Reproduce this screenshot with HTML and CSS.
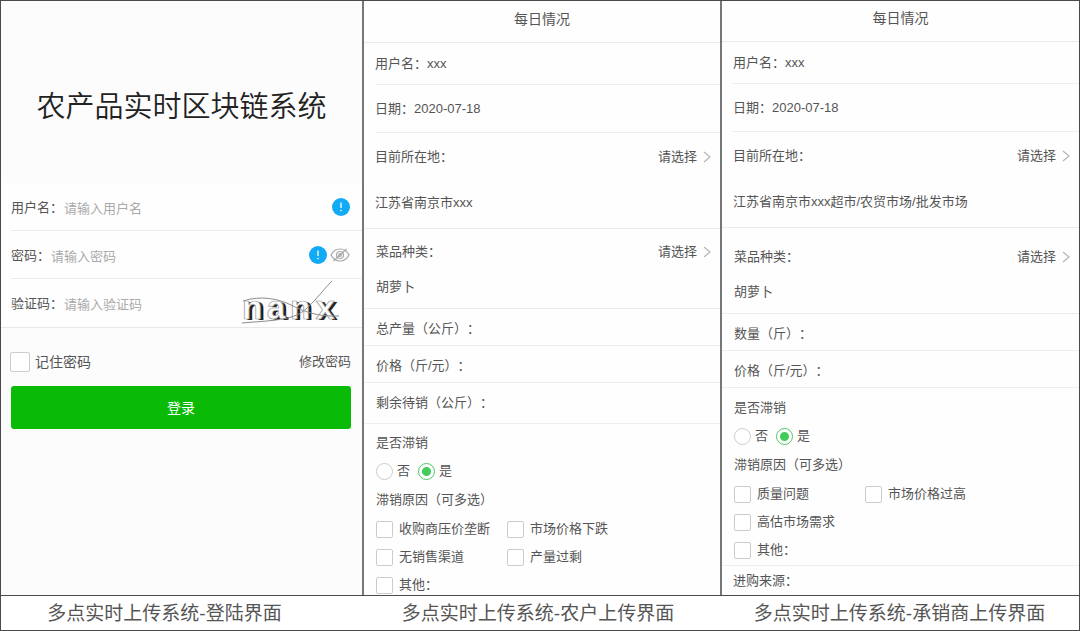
FILE: index.html
```html
<!DOCTYPE html>
<html lang="zh-CN">
<head>
<meta charset="utf-8">
<meta name="viewport" content="width=device-width, initial-scale=1">
<title>农产品实时区块链系统</title>
<link rel="stylesheet" href="styles.css">
</head>
<body>
<main class="board">
  <section class="screen login">
    <h1 class="login-title">农产品实时区块链系统</h1>
    <form class="login-form">
      <div class="login-fields">
        <div class="login-row">
          <label for="user">用户名：</label>
          <input id="user" type="text" placeholder="请输入用户名">
          <svg class="alert" viewBox="0 0 18 18" aria-hidden="true"><circle cx="9" cy="9" r="9" fill="#12aaf5"/><path d="M9 4.500V10" stroke="#fff" stroke-width="1.300"/><circle cx="9" cy="12.500" r=".8" fill="#fff"/></svg>
        </div>
        <div class="login-row">
          <label for="pass">密码：</label>
          <input id="pass" type="password" placeholder="请输入密码">
          <svg class="alert" viewBox="0 0 18 18" aria-hidden="true"><circle cx="9" cy="9" r="9" fill="#12aaf5"/><path d="M9 4.500V10" stroke="#fff" stroke-width="1.300"/><circle cx="9" cy="12.500" r=".8" fill="#fff"/></svg>
          <svg class="eye" viewBox="0 0 20 16" fill="none" stroke="#a8a8a8" stroke-width="1.200" aria-hidden="true"><path d="M1 8C5 0 15 0 19 8C15 16 5 16 1 8Z"/><circle cx="10" cy="8" r="3.500"/><circle cx="10" cy="8" r="1.300"/><path d="M3.500 14L16.500 2"/></svg>
        </div>
        <div class="login-row last">
          <label for="code">验证码：</label>
          <input id="code" type="text" placeholder="请输入验证码">
          <svg class="captcha" viewBox="0 0 100 48" role="img" aria-label="nanx">
            <g class="captcha-shadow"><text x="4 28 52 77" y="41">nanx</text></g>
            <g class="captcha-face"><text x="1 25 49 74" y="40">nanx</text></g>
            <path d="M2 22C20 16 38 20 50 26S76 38 98 37M1 44C22 42 44 42 58 35C70 28 80 13 91 2" fill="none" stroke="#8c8c8c"/>
          </svg>
        </div>
      </div>
      <div class="login-tools">
        <label class="remember"><input class="box" type="checkbox">记住密码</label>
        <a class="change" href="#">修改密码</a>
      </div>
      <button class="submit" type="button">登录</button>
    </form>
  </section>

  <section class="screen farmer">
    <h2 class="head">每日情况</h2>
    <form>
      <div class="row user"><span>用户名：xxx</span></div>
      <div class="row date"><span>日期：2020-07-18</span></div>
      <div class="group place">
        <div class="pick"><label for="f-place">目前所在地：</label><span class="picker"><select id="f-place"><option>请选择</option></select><svg class="chevron" viewBox="0 0 8 12" aria-hidden="true"><path d="M1 1L7 6L1 11"/></svg></span></div>
        <p class="value">江苏省南京市xxx</p>
      </div>
      <div class="group crop">
        <div class="pick"><label for="f-crop">菜品种类：</label><span class="picker"><select id="f-crop"><option>请选择</option></select><svg class="chevron" viewBox="0 0 8 12" aria-hidden="true"><path d="M1 1L7 6L1 11"/></svg></span></div>
        <p class="value">胡萝卜</p>
      </div>
      <div class="row entry"><label for="f-total">总产量（公斤）：</label><input id="f-total" type="text"></div>
      <div class="row entry"><label for="f-price">价格（斤/元）：</label><input id="f-price" type="text"></div>
      <div class="row entry tall"><label for="f-left">剩余待销（公斤）：</label><input id="f-left" type="text"></div>
      <fieldset class="sales">
        <legend>是否滞销</legend>
        <div class="radios">
          <label><input class="dot" type="radio" name="f-slow">否</label>
          <label><input class="dot" type="radio" name="f-slow" checked>是</label>
        </div>
      </fieldset>
      <fieldset class="reasons">
        <legend>滞销原因（可多选）</legend>
        <div class="choices">
          <label><input class="box" type="checkbox">收购商压价垄断</label>
          <label><input class="box" type="checkbox">市场价格下跌</label>
          <label><input class="box" type="checkbox">无销售渠道</label>
          <label><input class="box" type="checkbox">产量过剩</label>
          <label><input class="box" type="checkbox">其他：</label>
        </div>
      </fieldset>
    </form>
  </section>

  <section class="screen dealer">
    <h2 class="head">每日情况</h2>
    <form>
      <div class="row user"><span>用户名：xxx</span></div>
      <div class="row date"><span>日期：2020-07-18</span></div>
      <div class="group place">
        <div class="pick"><label for="d-place">目前所在地：</label><span class="picker"><select id="d-place"><option>请选择</option></select><svg class="chevron" viewBox="0 0 8 12" aria-hidden="true"><path d="M1 1L7 6L1 11"/></svg></span></div>
        <p class="value">江苏省南京市xxx超市/农贸市场/批发市场</p>
      </div>
      <div class="group crop">
        <div class="pick"><label for="d-crop">菜品种类：</label><span class="picker"><select id="d-crop"><option>请选择</option></select><svg class="chevron" viewBox="0 0 8 12" aria-hidden="true"><path d="M1 1L7 6L1 11"/></svg></span></div>
        <p class="value">胡萝卜</p>
      </div>
      <div class="row entry"><label for="d-count">数量（斤）：</label><input id="d-count" type="text"></div>
      <div class="row entry"><label for="d-price">价格（斤/元）：</label><input id="d-price" type="text"></div>
      <fieldset class="sales">
        <legend>是否滞销</legend>
        <div class="radios">
          <label><input class="dot" type="radio" name="d-slow">否</label>
          <label><input class="dot" type="radio" name="d-slow" checked>是</label>
        </div>
      </fieldset>
      <fieldset class="reasons">
        <legend>滞销原因（可多选）</legend>
        <div class="choices">
          <label><input class="box" type="checkbox">质量问题</label>
          <label><input class="box" type="checkbox">市场价格过高</label>
          <label class="full"><input class="box" type="checkbox">高估市场需求</label>
          <label><input class="box" type="checkbox">其他：</label>
        </div>
      </fieldset>
      <div class="row source"><label for="d-source">进购来源：</label><input id="d-source" type="text"></div>
    </form>
  </section>

  <p class="caption first">多点实时上传系统-登陆界面</p>
  <p class="caption second">多点实时上传系统-农户上传界面</p>
  <p class="caption">多点实时上传系统-承销商上传界面</p>
</main>
</body>
</html>
```

FILE: styles.css
```css
* { box-sizing: border-box; }
body {
  margin: 0;
  color: #555;
  background: #fff;
  font: 13px/20px "Liberation Sans", "Noto Sans CJK SC", sans-serif;
  text-spacing-trim: space-all;
}
h1, h2, p, fieldset, legend { margin: 0; padding: 0; border: 0; }
input, select, button { font: inherit; color: inherit; }
input[type="text"], input[type="password"] {
  flex: 1;
  min-width: 0;
  padding: 0;
  border: 0;
  outline: 0;
  background: none;
}

.board {
  display: grid;
  grid-template-columns: 361fr 358fr 359fr;
  grid-template-rows: 1fr auto;
  min-height: 100vh;
  border: 1px solid #4a4a4a;
}
.screen { background: #fefefe; }
.farmer, .dealer { border-left: 2px solid #777; }
.caption {
  padding: 4px 0 2px;
  border-top: 1px solid #4a4a4a;
  font-size: 19px;
  line-height: 28px;
  text-align: center;
}
.caption.first { padding-right: 34px; }
.caption.second { padding-right: 6px; }

/* Login */
.login { background: #fcfcfc; }
.login-title {
  padding: 86px 0 56px;
  color: #222;
  font-size: 29px;
  font-weight: 350;
  line-height: 40px;
  text-align: center;
}
.login-fields {
  padding-left: 10px;
  background: #fefefe;
  border-bottom: 1px solid #e8e8e8;
}
.login-row {
  display: flex;
  align-items: center;
  height: 48px;
  padding-right: 12px;
  border-bottom: 1px solid #ececec;
}
.login-row label { padding-top: 2px; }
.login-row input[type] { padding: 4px 0 0 1px; }
.login-row.last { border-bottom: 0; padding-right: 21px; }
.login-row input::placeholder { color: #aaa; opacity: 1; }
.alert { width: 18px; height: 18px; }
.eye { width: 20px; height: 16px; margin-left: 3px; }
.captcha { flex: none; width: 100px; height: 48px; overflow: visible; }
.captcha text { font: bold 34px "Liberation Mono", monospace; }
.captcha-shadow { fill: #222; }
.captcha-face { fill: #fdfdfd; stroke: #999; stroke-width: .7; }
.login-tools {
  display: flex;
  align-items: center;
  justify-content: space-between;
  padding: 24px 11px 14px 9px;
}
.remember { display: flex; align-items: center; gap: 5px; font-size: 14px; }
.change { color: inherit; text-decoration: none; }
.submit {
  display: block;
  width: calc(100% - 21px);
  height: 43px;
  margin: 0 11px 0 10px;
  border: 0;
  border-radius: 3px;
  background: #09bb07;
  color: #fff;
  font-size: 14px;
}

/* Daily report */
.head {
  padding: 8px 0 13px;
  border-bottom: 1px solid #eaeaea;
  font-size: 14px;
  font-weight: 400;
  line-height: 20px;
  text-align: center;
}
.dealer .head { padding: 7px 0 13px; }
.row { display: flex; align-items: center; border-bottom: 1px solid #eee; }
.user, .date { margin-left: 11px; }
.user { height: 42px; }
.date { height: 48px; }
.group { border-bottom: 1px solid #ececec; }
.place { padding: 14px 9px 15px 11px; }
.place .value { padding-top: 26px; }
.crop { padding: 13px 9px 11px 12px; }
.crop .value { padding-top: 15px; }
.dealer .crop { padding-top: 19px; }
.pick { display: flex; justify-content: space-between; }
.picker { display: flex; align-items: center; gap: 5px; }
.picker select {
  height: 20px;
  padding: 0;
  border: 0;
  outline: 0;
  background: none;
  appearance: none;
}
.chevron {
  width: 8px;
  height: 12px;
  fill: none;
  stroke: #b5b5b5;
  stroke-width: 1.2;
}
.entry { height: 37px; padding: 3px 12px 0; }
.tall { height: 41px; padding-top: 0; }
.sales { padding: 0 12px; }
.sales legend { padding-top: 9px; }
.dealer .sales legend { padding-top: 10px; }
.radios { display: flex; gap: 8px; padding-top: 8px; }
.radios label, .choices label { display: flex; align-items: center; }
.radios label { gap: 4px; }
.reasons { padding: 0 12px; }
.reasons legend { padding-top: 9px; }
.choices {
  display: grid;
  grid-template-columns: 131px 1fr;
  row-gap: 8px;
  padding-top: 9px;
}
.choices label { gap: 6px; }
.full { grid-column: 1 / -1; }
.box, .dot {
  flex: none;
  width: 17px;
  height: 17px;
  margin: 0;
  border: 1px solid #ccc;
  background: #fff;
  appearance: none;
}
.box { border-radius: 2px; }
.box:checked { background: #4cd964; }
.remember .box { width: 20px; height: 20px; }
.dot { border-radius: 50%; }
.dot:checked {
  border-color: #4cc764;
  background: radial-gradient(circle, #41cc5c 4px, #fff 5px);
}
.dealer .reasons { padding-bottom: 5px; border-bottom: 1px solid #eee; }
.source { height: 28px; padding: 2px 11px 0; border-bottom: 0; }
```
